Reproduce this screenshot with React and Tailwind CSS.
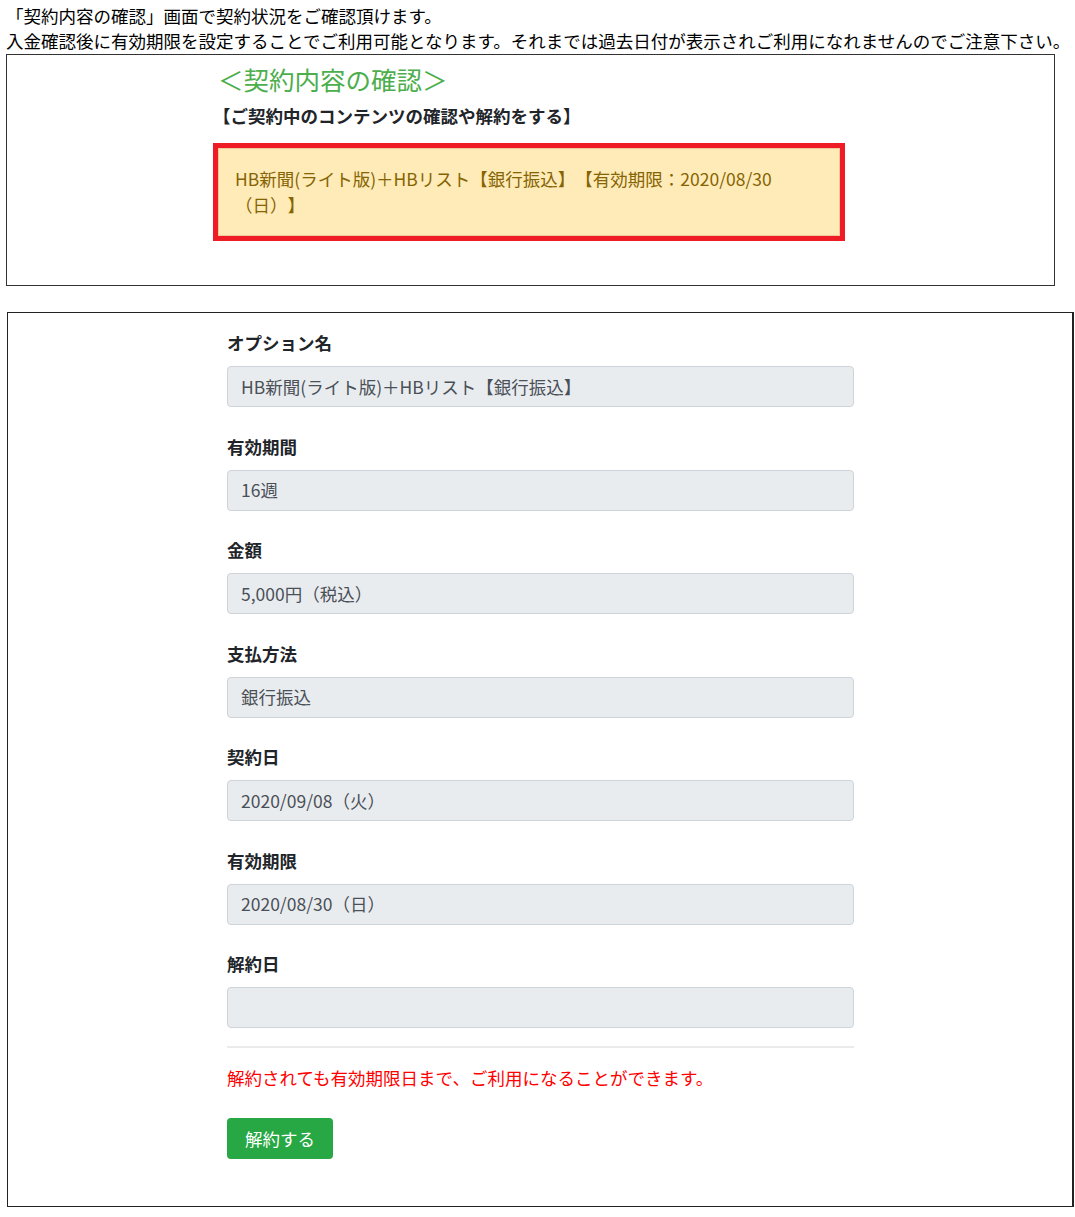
export default function App() {
  const fields = [
    { label: "オプション名", value: "HB新聞(ライト版)＋HBリスト【銀行振込】" },
    { label: "有効期間", value: "16週" },
    { label: "金額", value: "5,000円（税込）" },
    { label: "支払方法", value: "銀行振込" },
    { label: "契約日", value: "2020/09/08（火）" },
    { label: "有効期限", value: "2020/08/30（日）" },
    { label: "解約日", value: "" },
  ];
  return (
    <div className="font-['Noto_Sans_CJK_JP','Noto_Sans',sans-serif] text-[17.5px] text-black bg-white min-h-[1217px] pb-[8px] [text-spacing-trim:space-all]">
      <p className="pl-[6px] pt-[3px] leading-[25px] whitespace-nowrap">
        「契約内容の確認」画面で契約状況をご確認頂けます。
        <br />
        入金確認後に有効期限を設定することでご利用可能となります。それまでは過去日付が表示されご利用になれませんのでご注意下さい。
      </p>
      <div className="ml-[6px] mt-[1px] w-[1049px] h-[232px] border border-[#333] pt-[8px]">
        <div className="ml-[206px] w-[632px]">
          <h3 className="text-[25.5px] leading-[32px] text-[#4cae4c] ml-[5px]">＜契約内容の確認＞</h3>
          <p className="mt-[8px] font-bold text-[#212529] leading-[26px]">【ご契約中のコンテンツの確認や解約をする】</p>
          <div className="mt-[14px] border-[5px] border-[#ee1c25]">
            <div className="border border-[#f5c89a] bg-[#ffebb7] text-[#856404] leading-[26px] px-[16px] pt-[17px] pb-[17px]">
              HB新聞(ライト版)＋HBリスト【銀行振込】【有効期限：2020/08/30
              <br />
              （日）】
            </div>
          </div>
        </div>
      </div>
      <div className="ml-[7px] mt-[26px] w-[1067px] border border-[#222] border-r-2 pt-[17px] pb-[47px]">
        <div className="ml-[219px] w-[627px]">
          {fields.map((f, i) => (
            <div key={f.label} className={i < fields.length - 1 ? "mb-[26.5px]" : ""}>
              <div className="font-bold text-[#212529] leading-[26px] mb-[10px]">{f.label}</div>
              <div className="h-[41px] rounded-[4px] bg-[#e9ecef] border border-[#ced4da] text-[#495057] px-[13px] flex items-center leading-[26px]">
                {f.value}
              </div>
            </div>
          ))}
          <div className="mt-[18px] h-[2px] bg-[#ebebeb]" />
          <p className="mt-[17px] leading-[26px] text-[#ff0000]">解約されても有効期限日まで、ご利用になることができます。</p>
          <button className="mt-[27px] h-[41px] px-[18px] rounded-[4px] bg-[#28a745] text-white leading-[26px]">解約する</button>
        </div>
      </div>
    </div>
  );
}
